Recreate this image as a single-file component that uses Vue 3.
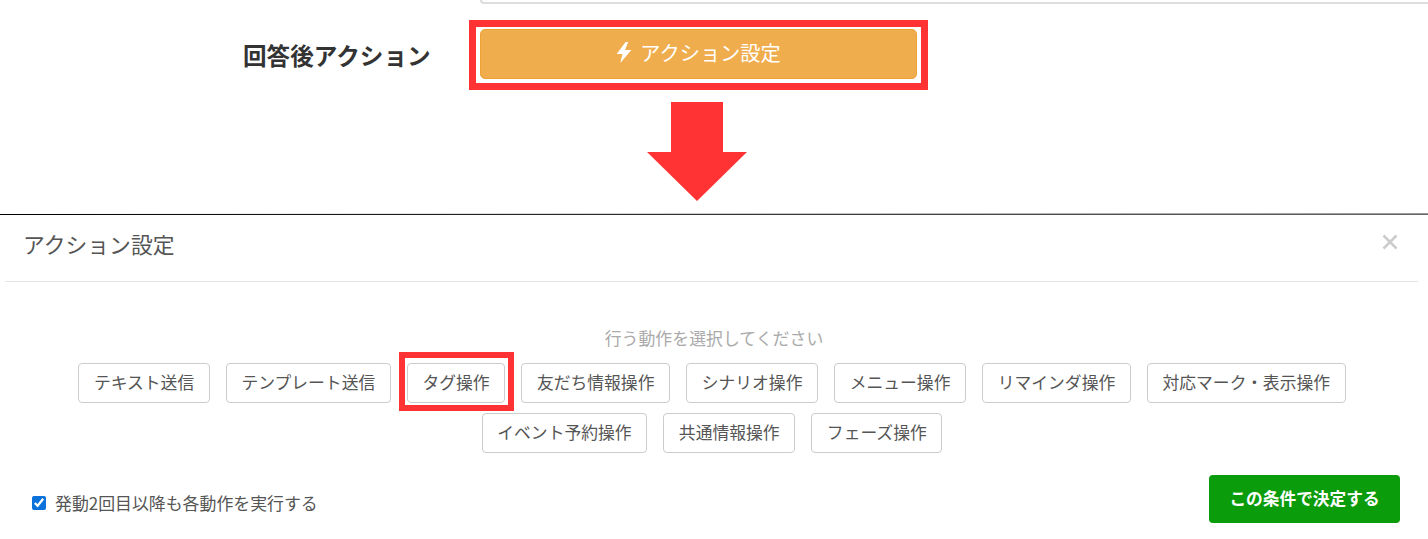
<template>
  <div class="page">
    <section class="form-part">
      <div class="input-stub"></div>
      <div class="action-row">
        <div class="action-label">回答後アクション</div>
        <button class="action-btn" type="button">
          <svg class="bolt" viewBox="0 0 15 20" aria-hidden="true">
            <path d="M9 0 .5 11.5H6L4 20 14.5 7.5H8.5L11.5 0z" fill="currentColor" />
          </svg>
          アクション設定
        </button>
      </div>
      <svg class="down-arrow" viewBox="0 0 100 99" aria-hidden="true">
        <path d="M24 0h52v50h24L50 99 0 50h24z" fill="#ff3333" />
      </svg>
    </section>
    <div class="rule"></div>

    <section class="modal">
      <header class="modal-head">
        <h3 class="modal-title">アクション設定</h3>
        <svg class="modal-close" viewBox="0 0 16 16" aria-hidden="true">
          <path d="M1.5 1.5l13 13M14.5 1.5l-13 13" />
        </svg>
      </header>

      <div class="modal-body">
        <p class="hint">行う動作を選択してください</p>
        <div class="choices">
          <button
            v-for="item in actions"
            :key="item"
            type="button"
            class="choice"
            :class="{ 'choice--marked': item === marked }"
          >
            {{ item }}
          </button>
        </div>
      </div>

      <footer class="modal-foot">
        <label class="repeat">
          <input v-model="repeat" type="checkbox" />
          発動2回目以降も各動作を実行する
        </label>
        <button class="submit" type="button">この条件で決定する</button>
      </footer>
    </section>
  </div>
</template>

<script setup>
import { ref } from 'vue'

const repeat = ref(true)
const marked = 'タグ操作'
const actions = [
  'テキスト送信',
  'テンプレート送信',
  'タグ操作',
  '友だち情報操作',
  'シナリオ操作',
  'メニュー操作',
  'リマインダ操作',
  '対応マーク・表示操作',
  'イベント予約操作',
  '共通情報操作',
  'フェーズ操作',
]
</script>

<style>
body {
  background: #fff;
}
</style>

<style scoped>
.page {
  width: 1428px;
  height: 539px;
  overflow: hidden;
  font-family: 'Noto Sans CJK JP', 'Noto Sans', sans-serif;
  color: #555;
}

.form-part {
  height: 213px;
}

.input-stub {
  box-sizing: border-box;
  height: 4px;
  margin-left: 480px;
  border: 2px solid #ddd;
  border-top: none;
  border-right: none;
  border-radius: 0 0 0 6px;
}

.action-row {
  display: flex;
  align-items: flex-start;
  margin-top: 25px;
}

.action-label {
  width: 237px;
  margin-left: 243px;
  font-size: 23.6px;
  font-weight: 700;
  color: #333;
  line-height: 52px;
  white-space: nowrap;
}

.action-btn {
  position: relative;
  display: flex;
  align-items: center;
  justify-content: center;
  box-sizing: border-box;
  width: 437px;
  height: 50px;
  padding: 0 0 4px;
  border: 1px solid #eea236;
  border-radius: 5px;
  background: #f0ad4e;
  color: #fff;
  font: inherit;
  font-size: 20.2px;
}

.action-btn::after {
  content: '';
  position: absolute;
  inset: -10px -12px -12px -12px;
  border: 7px solid #ff3333;
}

.bolt {
  width: 16px;
  height: 21px;
  margin-right: 8px;
}

.down-arrow {
  display: block;
  width: 100px;
  height: 99px;
  margin: 21px 0 0 647px;
}

.rule {
  height: 2px;
  background:
    linear-gradient(90deg, #fff 0%, #999 100%) top / 100% 1px no-repeat,
    linear-gradient(90deg, #000 0%, #666 100%) bottom / 100% 1px no-repeat;
}

.modal-head {
  display: flex;
  align-items: center;
  justify-content: space-between;
  height: 56px;
  margin: 0 10px 0 5px;
  padding: 0 20px 10px 18px;
  border-bottom: 1px solid #e5e5e5;
}

.modal-title {
  margin: 0;
  font-size: 21.8px;
  font-weight: 400;
  color: #555;
}

.modal-close {
  width: 16px;
  height: 16px;
  margin-top: -3px;
  fill: none;
  stroke: #ccc;
  stroke-width: 2.6;
}

.modal-body {
  padding-top: 44px;
  text-align: center;
}

.hint {
  margin: 0 0 13px;
  font-size: 16.9px;
  line-height: 24px;
  color: #aaa;
}

.choices {
  display: flex;
  flex-wrap: wrap;
  justify-content: center;
  gap: 10px 16.3px;
  width: 1424px;
}

.choice {
  position: relative;
  box-sizing: border-box;
  height: 40px;
  padding: 0 14.5px 3px;
  border: 1px solid #ccc;
  border-radius: 4px;
  background: #fff;
  color: #555;
  font: inherit;
  font-size: 16.8px;
}

.choice--marked::after {
  content: '';
  position: absolute;
  inset: -12px -10px -9px -9px;
  border: 6.5px solid #ff3333;
}

.modal-foot {
  display: flex;
  align-items: flex-start;
  justify-content: space-between;
  margin-top: 22px;
  padding: 0 28px 0 32px;
}

.repeat {
  display: flex;
  align-items: center;
  gap: 9px;
  padding-top: 15px;
  font-size: 16.9px;
  color: #555;
}

.repeat input {
  width: 14px;
  height: 14px;
  margin: 1px 0 0;
  accent-color: #0b72db;
}

.submit {
  width: 191px;
  height: 48px;
  padding: 0 0 3px;
  border: none;
  border-radius: 4px;
  background: #0a9c0a;
  color: #fff;
  font: inherit;
  font-size: 16.7px;
  font-weight: 700;
}
</style>
